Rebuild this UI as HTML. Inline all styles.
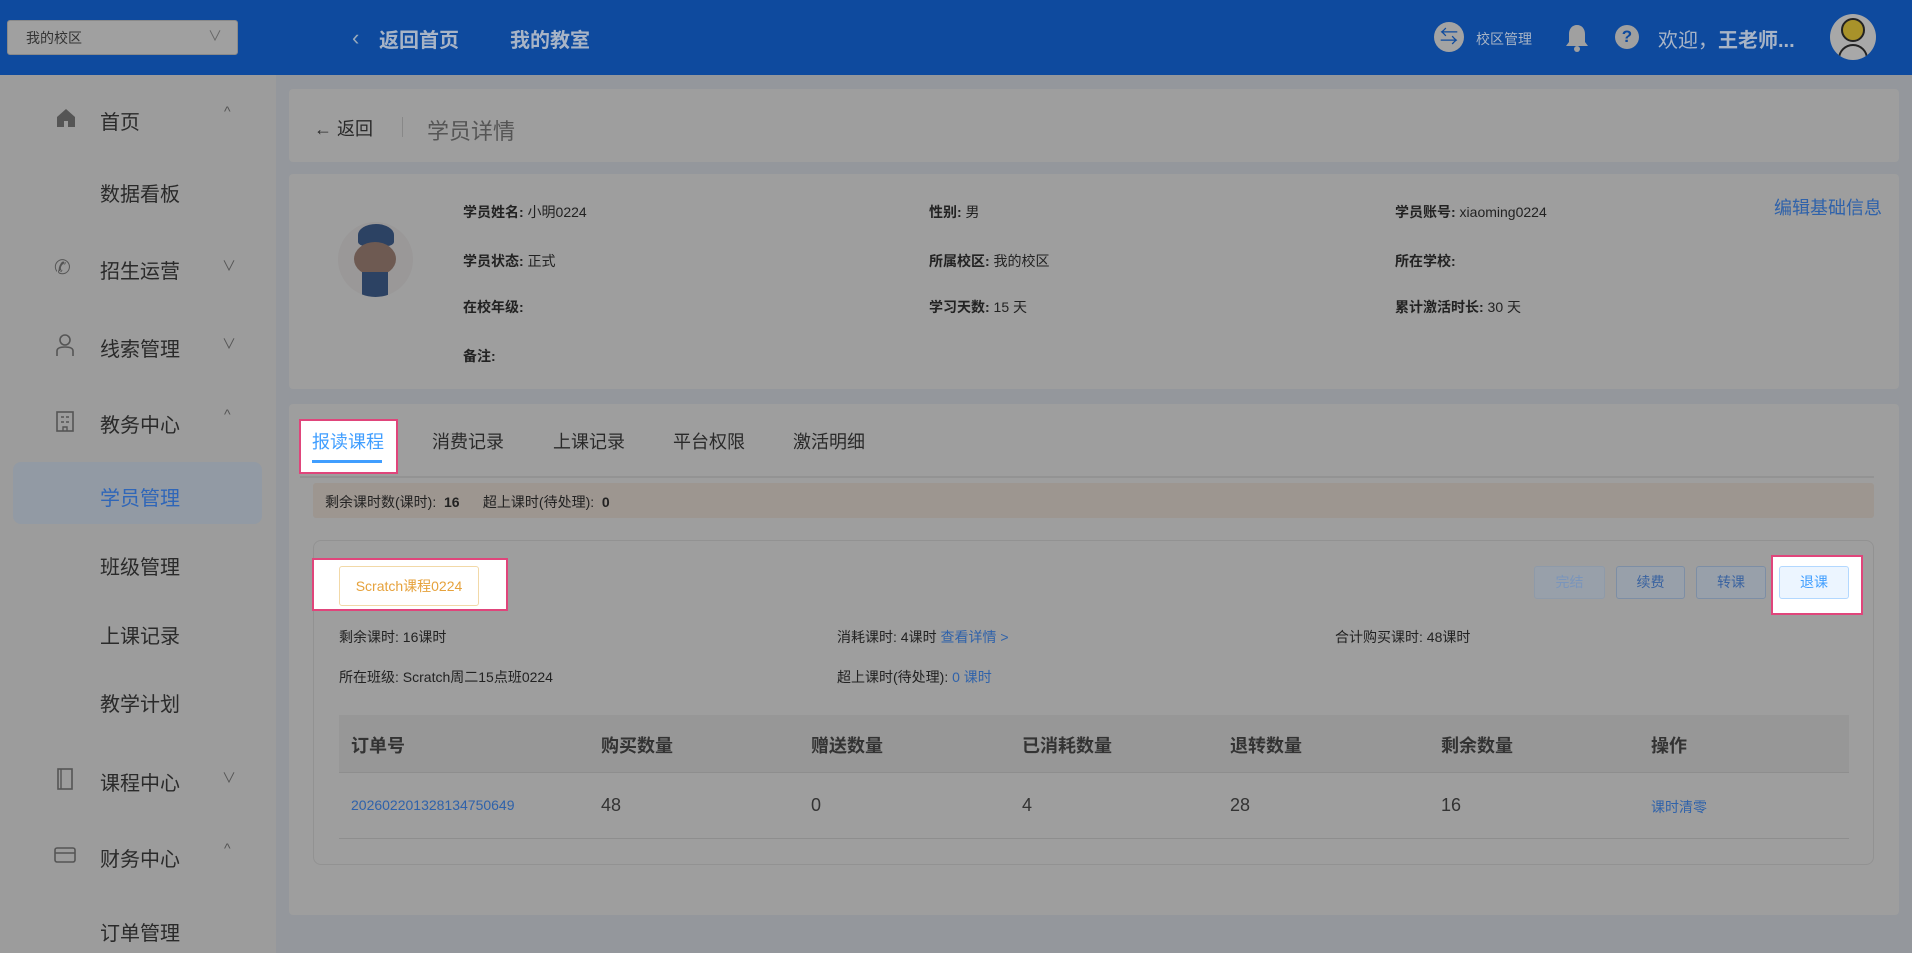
<!DOCTYPE html>
<html><head><meta charset="utf-8"><style>
*{margin:0;padding:0;box-sizing:border-box}
body{width:1912px;height:953px;overflow:hidden;background:#94979c;font-family:"Liberation Sans","Noto Sans CJK SC",sans-serif;color:#262626;position:relative}
.a{position:absolute;white-space:nowrap}
.hdr{left:0;top:0;width:1912px;height:75px;background:#0e4a9e}
.side{left:0;top:75px;width:276px;height:878px;background:#9c9c9c}
.card{background:#9e9e9e;border-radius:4px}
.si{font-size:20px;color:#2a2a2a}
.chev{font-size:14px;color:#555}
.lb{font-size:14px;color:#222}
.lb b{font-weight:bold}
.th{font-size:18px;font-weight:bold;color:#333}
.td{font-size:18px;color:#333}
.btn{height:33px;border:1px solid #7d8ea5;background:#98a0aa;border-radius:3px;font-size:14px;color:#3a63a0;text-align:center;line-height:31px}
</style></head><body>
<div class="a hdr"></div>
<div class="a" style="left:7px;top:20px;width:231px;height:35px;background:#a0a0a0;border-radius:3px;border:1px solid #8a8a8a"></div>
<div class="a" style="left:26px;top:28px;font-size:14px;color:#333">我的校区</div>
<div class="a" style="left:208px;top:26px;font-size:14px;color:#666">∨</div>
<div class="a" style="left:352px;top:25px;font-size:22px;color:#9ab;">‹</div>
<div class="a" style="left:379px;top:24px;font-size:20px;font-weight:bold;color:#a8b4c6">返回首页</div>
<div class="a" style="left:510px;top:24px;font-size:20px;font-weight:bold;color:#a8b4c6">我的教室</div>
<div class="a" style="left:1434px;top:22px;width:30px;height:30px;border-radius:50%;background:#a3a3a3;color:#0e4a9e;font-size:18px;text-align:center;line-height:30px">⇆</div>
<div class="a" style="left:1476px;top:29px;font-size:14px;color:#a8b4c6">校区管理</div>
<svg class="a" style="left:1564px;top:23px" width="26" height="30" viewBox="0 0 26 30"><path d="M13 2c-5 0-8 4-8 9v8l-3 4h22l-3-4v-8c0-5-3-9-8-9z" fill="#a0a0a0"/><circle cx="13" cy="26" r="3" fill="#a0a0a0"/></svg>
<div class="a" style="left:1615px;top:25px;width:24px;height:24px;border-radius:50%;background:#a0a0a0;color:#0e4a9e;font-size:17px;font-weight:bold;text-align:center;line-height:24px">?</div>
<div class="a" style="left:1658px;top:24px;font-size:20px;color:#a8b4c6">欢迎，<b>王老师...</b></div>
<div class="a" style="left:1830px;top:14px;width:46px;height:46px;border-radius:50%;background:#a8a8a8;overflow:hidden"><div style="position:absolute;left:11px;top:4px;width:24px;height:24px;border-radius:50%;background:#a8922a;border:2px solid #222"></div><div style="position:absolute;left:8px;top:30px;width:30px;height:30px;border-radius:50%;border:2px solid #222"></div></div>

<div class="a side"></div>
<div class="a" style="left:13px;top:462px;width:249px;height:62px;background:#929aa4;border-radius:8px"></div>
<svg class="a" style="left:55px;top:107px" width="22" height="22" viewBox="0 0 22 22"><path d="M11 2L2 10v10h7v-6h4v6h7V10z" fill="#555"/></svg>
<div class="a si" style="left:100px;top:106px">首页</div><div class="a chev" style="left:224px;top:103px">^</div>
<div class="a si" style="left:100px;top:178px">数据看板</div>
<div class="a" style="left:54px;top:255px;font-size:20px;color:#555">✆</div>
<div class="a si" style="left:100px;top:255px">招生运营</div><div class="a chev" style="left:222px;top:256px">∨</div>
<svg class="a" style="left:55px;top:333px" width="20" height="24" viewBox="0 0 20 24"><circle cx="10" cy="7" r="5" fill="none" stroke="#555" stroke-width="1.6"/><path d="M2 23v-5q0-4 8-4t8 4v5" fill="none" stroke="#555" stroke-width="1.6"/></svg>
<div class="a si" style="left:100px;top:333px">线索管理</div><div class="a chev" style="left:222px;top:334px">∨</div>
<svg class="a" style="left:55px;top:410px" width="20" height="22" viewBox="0 0 20 22"><rect x="2" y="2" width="16" height="19" fill="none" stroke="#555" stroke-width="1.6"/><path d="M6 7h3M11 7h3M6 12h3M11 12h3M8 21v-4h4v4" stroke="#555" stroke-width="1.4" fill="none"/></svg>
<div class="a si" style="left:100px;top:409px">教务中心</div><div class="a chev" style="left:224px;top:406px">^</div>
<div class="a si" style="left:100px;top:482px;color:#2f66b8">学员管理</div>
<div class="a si" style="left:100px;top:551px">班级管理</div>
<div class="a si" style="left:100px;top:620px">上课记录</div>
<div class="a si" style="left:100px;top:688px">教学计划</div>
<svg class="a" style="left:56px;top:767px" width="18" height="24" viewBox="0 0 18 24"><rect x="2" y="2" width="14" height="20" fill="none" stroke="#555" stroke-width="1.6"/><path d="M5 2v20" stroke="#555" stroke-width="1.4"/></svg>
<div class="a si" style="left:100px;top:767px">课程中心</div><div class="a chev" style="left:222px;top:768px">∨</div>
<svg class="a" style="left:54px;top:846px" width="22" height="18" viewBox="0 0 22 18"><rect x="1" y="2" width="20" height="14" rx="2" fill="none" stroke="#555" stroke-width="1.6"/><path d="M1 7h20" stroke="#555" stroke-width="1.6"/></svg>
<div class="a si" style="left:100px;top:843px">财务中心</div><div class="a chev" style="left:224px;top:840px">^</div>
<div class="a si" style="left:100px;top:917px">订单管理</div>

<div class="a card" style="left:289px;top:89px;width:1610px;height:73px"></div>
<div class="a" style="left:314px;top:115px;font-size:18px;color:#2a2a2a">← 返回</div>
<div class="a" style="left:402px;top:117px;width:1px;height:20px;background:#888"></div>
<div class="a" style="left:427px;top:114px;font-size:22px;color:#555">学员详情</div>

<div class="a card" style="left:289px;top:174px;width:1610px;height:215px"></div>
<div class="a" style="left:338px;top:222px;width:75px;height:75px;border-radius:50%;background:#9a9898;overflow:hidden">
<div style="position:absolute;left:20px;top:2px;width:36px;height:22px;background:#2c4263;border-radius:50% 50% 20% 20%"></div>
<div style="position:absolute;left:16px;top:20px;width:42px;height:34px;background:#6e5a52;border-radius:50%"></div>
<div style="position:absolute;left:24px;top:50px;width:26px;height:25px;background:#2c4263"></div></div>
<div class="a lb" style="left:463px;top:202px"><b>学员姓名:</b> 小明0224</div>
<div class="a lb" style="left:929px;top:202px"><b>性别:</b> 男</div>
<div class="a lb" style="left:1395px;top:202px"><b>学员账号:</b> xiaoming0224</div>
<div class="a" style="left:1774px;top:194px;font-size:18px;color:#2f62aa">编辑基础信息</div>
<div class="a lb" style="left:463px;top:251px"><b>学员状态:</b> 正式</div>
<div class="a lb" style="left:929px;top:251px"><b>所属校区:</b> 我的校区</div>
<div class="a lb" style="left:1395px;top:251px"><b>所在学校:</b></div>
<div class="a lb" style="left:463px;top:297px"><b>在校年级:</b></div>
<div class="a lb" style="left:929px;top:297px"><b>学习天数:</b> 15 天</div>
<div class="a lb" style="left:1395px;top:297px"><b>累计激活时长:</b> 30 天</div>
<div class="a lb" style="left:463px;top:346px"><b>备注:</b></div>

<div class="a card" style="left:289px;top:404px;width:1610px;height:511px"></div>
<div class="a" style="left:300px;top:476px;width:1574px;height:2px;background:#939393"></div>
<div class="a" style="left:299px;top:419px;width:99px;height:55px;background:#fff;border:2px solid #e0457b"></div>
<div class="a" style="left:312px;top:428px;font-size:18px;color:#409eff">报读课程</div>
<div class="a" style="left:312px;top:460px;width:70px;height:3px;background:#409eff"></div>
<div class="a" style="left:432px;top:428px;font-size:18px;color:#2a2a2a">消费记录</div>
<div class="a" style="left:553px;top:428px;font-size:18px;color:#2a2a2a">上课记录</div>
<div class="a" style="left:673px;top:428px;font-size:18px;color:#2a2a2a">平台权限</div>
<div class="a" style="left:793px;top:428px;font-size:18px;color:#2a2a2a">激活明细</div>
<div class="a" style="left:313px;top:483px;width:1561px;height:35px;background:#9d9690;border-radius:3px"></div>
<div class="a lb" style="left:325px;top:492px">剩余课时数(课时): &nbsp;<b>16</b> &nbsp;&nbsp;&nbsp;&nbsp;&nbsp;超上课时(待处理): &nbsp;<b>0</b></div>

<div class="a" style="left:313px;top:540px;width:1561px;height:325px;border:1px solid #929292;border-radius:8px"></div>
<div class="a" style="left:312px;top:558px;width:196px;height:53px;background:#fff;border:2px solid #e0457b"></div>
<div class="a" style="left:339px;top:566px;width:140px;height:40px;border:1px solid #f2d9a8;border-radius:3px;color:#e6a23c;font-size:14px;text-align:center;line-height:38px">Scratch课程0224</div>
<div class="a btn" style="left:1534px;top:566px;width:71px;color:#7a95bb;border-color:#8e9aa9">完结</div>
<div class="a btn" style="left:1616px;top:566px;width:69px">续费</div>
<div class="a btn" style="left:1696px;top:566px;width:70px">转课</div>
<div class="a" style="left:1771px;top:555px;width:92px;height:60px;background:#fff;border:2px solid #e0457b"></div>
<div class="a btn" style="left:1779px;top:566px;width:70px;background:#ecf5ff;border-color:#b3d8ff;color:#409eff">退课</div>
<div class="a lb" style="left:339px;top:627px">剩余课时: 16课时</div>
<div class="a lb" style="left:837px;top:627px">消耗课时: 4课时 <span style="color:#2f62aa">查看详情 &gt;</span></div>
<div class="a lb" style="left:1335px;top:627px">合计购买课时: 48课时</div>
<div class="a lb" style="left:339px;top:667px">所在班级: Scratch周二15点班0224</div>
<div class="a lb" style="left:837px;top:667px">超上课时(待处理): <span style="color:#2f62aa">0 课时</span></div>

<div class="a" style="left:339px;top:715px;width:1510px;height:58px;background:#979797;border-bottom:1px solid #8e8e8e"></div>
<div class="a th" style="left:351px;top:732px">订单号</div>
<div class="a th" style="left:601px;top:732px">购买数量</div>
<div class="a th" style="left:811px;top:732px">赠送数量</div>
<div class="a th" style="left:1022px;top:732px">已消耗数量</div>
<div class="a th" style="left:1230px;top:732px">退转数量</div>
<div class="a th" style="left:1441px;top:732px">剩余数量</div>
<div class="a th" style="left:1651px;top:732px">操作</div>
<div class="a" style="left:351px;top:797px;font-size:14px;color:#2f62aa">20260220132813475064​9</div>
<div class="a td" style="left:601px;top:795px">48</div>
<div class="a td" style="left:811px;top:795px">0</div>
<div class="a td" style="left:1022px;top:795px">4</div>
<div class="a td" style="left:1230px;top:795px">28</div>
<div class="a td" style="left:1441px;top:795px">16</div>
<div class="a" style="left:1651px;top:797px;font-size:14px;color:#2f62aa">课时清零</div>
<div class="a" style="left:339px;top:838px;width:1510px;height:1px;background:#8e8e8e"></div>
</body></html>
